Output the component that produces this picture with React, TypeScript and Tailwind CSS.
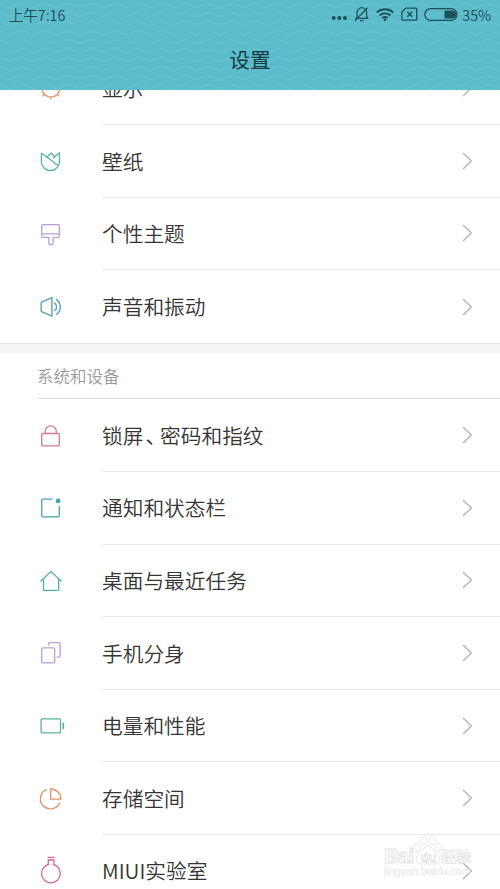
import type { ReactNode } from "react";

type Item = {
  label: ReactNode;
  icon: ReactNode;
};

const lookItems: Item[] = [
  {
    label: "显示",
    icon: (
      <g stroke="#e0936a">
        <circle cx="15.4" cy="14.8" r="8.8" />
        <path d="M15.4 23.8V26M8.8 21.3l-1.500 1.500M22 21.300l1.500 1.500M24.400 14.800h2M6.400 14.800h-2M15.400 5.800v-2" />
      </g>
    ),
  },
  {
    label: "壁纸",
    icon: (
      <g stroke="#57b3a1">
        <path d="M5.9 7.4v8.8a9 9 0 0 0 18 0V7.4l-6.4 5.4M5.9 7.4l16.4 12.4M11.7 11.2l3.8-3.6 3.6 3.4" />
      </g>
    ),
  },
  {
    label: "个性主题",
    icon: (
      <g stroke="#b9a0d6">
        <path d="M7.2 6.2h15.6a1 1 0 0 1 1 1v10.6a1 1 0 0 1-1 1h-5.1v5.2a2.2 2.2 0 0 1-4.4 0v-5.2H7.2a1 1 0 0 1-1-1V7.2a1 1 0 0 1 1-1zM6.2 15.4h17.6" />
      </g>
    ),
  },
  {
    label: "声音和振动",
    icon: (
      <g stroke="#4a9fba">
        <path d="M16.4 6.2v18.4L6.6 20.4a1.6 1.6 0 0 1-1-1.5v-7a1.6 1.6 0 0 1 1-1.5zM18.8 11.4a4.6 4.6 0 0 1 0 8M20.6 7.6a9.4 9.4 0 0 1 0 15.6" />
      </g>
    ),
  },
];

const deviceItems: Item[] = [
  {
    label: (
      <>
        锁屏<span className="ml-[2px] tracking-[-6px]">、</span>密码和指纹
      </>
    ),
    icon: (
      <g stroke="#d67b8e">
        <rect x="6.2" y="13" width="17.6" height="12.4" rx="1" />
        <path d="M9.6 13v-2a5.6 5.6 0 0 1 11.2 0v2" />
      </g>
    ),
  },
  {
    label: "通知和状态栏",
    icon: (
      <g stroke="#4a9fba">
        <path d="M17 6.7H7.2a1 1 0 0 0-1 1v15.6a1 1 0 0 0 1 1h15.6a1 1 0 0 0 1-1V13.4" />
        <circle cx="22.6" cy="8.4" r="1.8" fill="#4a9fba" />
      </g>
    ),
  },
  {
    label: "桌面与最近任务",
    icon: (
      <g stroke="#57b3a1">
        <path d="M5 16 15.5 5.8 26 16M8 13.5v11.3h15.2V13.5" />
      </g>
    ),
  },
  {
    label: "手机分身",
    icon: (
      <g stroke="#b9a0d6">
        <rect x="6.2" y="10.4" width="13" height="15" rx="1" />
        <path d="M13 8.2v-2a1 1 0 0 1 1-1h9.6a1 1 0 0 1 1 1v12.4a1 1 0 0 1-1 1h-2.2" />
      </g>
    ),
  },
  {
    label: "电量和性能",
    icon: (
      <g stroke="#57b3a1">
        <rect x="5.6" y="8.4" width="19.4" height="14" rx="1" />
        <path d="M27.8 12.2v6.4" strokeWidth="1.7" />
      </g>
    ),
  },
  {
    label: "存储空间",
    icon: (
      <g stroke="#e0936a">
        <path d="M11.6 5.9a10 10 0 1 0 12.6 13M15.2 5.5v10.2h10.2A10.2 10.2 0 0 0 15.2 5.5z" />
      </g>
    ),
  },
  {
    label: "MIUI实验室",
    icon: (
      <g stroke="#d16a8e">
        <circle cx="15.4" cy="17.9" r="9.4" />
        <path d="M12 1.9h7.2" />
        <path d="M12.8 9.2V4.5h5.6v4.7" fill="#fff" />
      </g>
    ),
  },
];

function Row({ item, last }: { item: Item; last?: boolean }) {
  return (
    <li className="flex h-[72.6px] pl-9">
      <div className="flex w-[66px] shrink-0 items-center">
        <svg
          width="30"
          height="30"
          viewBox="0.5 0.5 30 30"
          fill="none"
          strokeWidth="1.3"
          className="overflow-visible"
        >
          {item.icon}
        </svg>
      </div>
      <div
        className={
          "flex flex-1 items-center justify-between pr-[27px] " +
          (last ? "" : "border-b border-[#e8e8e8]")
        }
      >
        <span className="text-[20.7px] leading-none font-[350] text-[#353535]">
          {item.label}
        </span>
        <svg width="12" height="20" viewBox="0 0 12 20" fill="none">
          <path d="M2 2l8.4 8L2 18" stroke="#b4b4b4" strokeWidth="1.4" />
        </svg>
      </div>
    </li>
  );
}

function StatusBar() {
  return (
    <div className="relative flex h-[29px] items-center justify-between pr-[9px] pl-[9px] text-[14.4px] font-[350] text-[#1b4f58]">
      <span>上午7:16</span>
      <svg
        width="128"
        height="20"
        viewBox="330.5 4.5 128 20"
        fill="none"
        stroke="#1d5059"
        strokeWidth="1.3"
        className="mr-[4px] ml-auto"
      >
        <g fill="#1d5059" stroke="none">
          <circle cx="334.2" cy="17.600" r="2" />
          <circle cx="339.8" cy="17.600" r="2" />
          <circle cx="345.4" cy="17.600" r="2" />
        </g>
        {/* muted bell */}
        <path d="M357.5 17.6V12a4.8 4.8 0 0 1 9.6 0v4.2l1 1.6h-12.2zM360.6 20.2h3.4M355.4 20.2 368 7.2" />
        {/* wifi */}
        <g strokeWidth="1.9">
          <path d="M377.2 12a12.4 12.4 0 0 1 16.6 0" />
          <path d="M380 15a8.2 8.2 0 0 1 11 0" />
          <path d="M382.8 17.6a4.2 4.2 0 0 1 5.4 0" />
        </g>
        <circle cx="385.5" cy="19.2" r="1.3" fill="#1d5059" stroke="none" />
        {/* sim card */}
        <path d="M406.2 7.7h10a1 1 0 0 1 1 1v10a1 1 0 0 1-1 1h-12.8a1 1 0 0 1-1-1v-7.2z" />
        <path d="M407.8 11.2l5 5M412.8 11.2l-5 5" strokeWidth="1.5" />
        <rect x="425.3" y="8.2" width="32.2" height="11.6" rx="5.8" />
        <path
          d="M445 10h7.6a4 4 0 0 1 0 8H445z"
          fill="#1d5059"
          stroke="none"
        />
      </svg>
      <span className="tracking-[-0.1px]">35%</span>
    </div>
  );
}

function Header() {
  return (
    <header className="relative h-[90px] shrink-0 overflow-hidden bg-[#5cbcca]">
      <svg className="absolute inset-0" width="500" height="90">
        <defs>
          <pattern
            id="waves"
            x="10"
            y="1"
            width="23.33"
            height="9"
            patternUnits="userSpaceOnUse"
          >
            <path
              d="M-1 7 0 6.6 11.67 2.2 23.33 6.6 24.4 7"
              fill="none"
              stroke="#64c1ce"
              strokeWidth="1.8"
            />
          </pattern>
        </defs>
        <rect width="500" height="90" fill="url(#waves)" />
      </svg>
      <StatusBar />
      <h1 className="relative flex h-[61px] items-center justify-center text-[20.7px] font-normal text-[#123c44]">
        设置
      </h1>
    </header>
  );
}

function Watermark() {
  return (
    <div className="absolute right-[27px] bottom-[7px] w-[90px]">
      <svg width="92" height="48" viewBox="0 0 92 48" fill="none">
        <g stroke="#e2e2e2" strokeWidth="0.9" fill="#fff">
          <ellipse cx="34" cy="13.5" rx="3.2" ry="4.2" />
          <ellipse cx="41" cy="6.5" rx="3.2" ry="4.2" />
          <ellipse cx="49.5" cy="6.5" rx="3.2" ry="4.2" />
          <ellipse cx="56" cy="13.5" rx="3.2" ry="4.2" />
          <path d="M45 12c-5 0-6 6-9.5 8.5s-3 9.5 3 9.5h13c6 0 6.5-7 3-9.5S50 12 45 12z" />
        </g>
        <g
          stroke="#dedede"
          strokeWidth="0.8"
          fontFamily="'Liberation Sans', sans-serif"
          fontWeight="700"
        >
          <text x="1" y="29" fontSize="20" textLength="30">
            Bai
          </text>
          <text x="37.5" y="28" fontSize="13">
            du
          </text>
          <text
            x="58"
            y="28"
            fontSize="15"
            strokeWidth="0.6"
            fontFamily="'Noto Sans CJK SC', sans-serif"
          >
            经验
          </text>
        </g>
        <text
          x="1"
          y="41"
          fontSize="11.5"
          textLength="87"
          fill="#e6e6e6"
          fontFamily="'Liberation Sans', sans-serif"
        >
          jingyan.baidu.com
        </text>
      </svg>
    </div>
  );
}

export default function App() {
  return (
    <div className="relative flex h-[889px] w-[500px] flex-col overflow-hidden bg-white font-['Noto_Sans_CJK_SC',sans-serif]">
      <Header />
      <main className="min-h-0 flex-1 overflow-hidden">
        {/* list is scrolled, first row sits partly under the header */}
        <ul className="-mt-[37.5px]">
          {lookItems.map((item, i) => (
            <Row key={i} item={item} last={i === lookItems.length - 1} />
          ))}
        </ul>
        <div className="h-[10.5px] border-t border-[#e2e2e2] bg-[#f5f5f5]" />
        <h2 className="ml-[37px] flex h-[46px] items-center border-b border-[#e2e2e2] text-[16.5px] font-[350] text-[#9a9a9a]">
          系统和设备
        </h2>
        <ul>
          {deviceItems.map((item, i) => (
            <Row key={i} item={item} />
          ))}
        </ul>
      </main>
      <Watermark />
    </div>
  );
}
